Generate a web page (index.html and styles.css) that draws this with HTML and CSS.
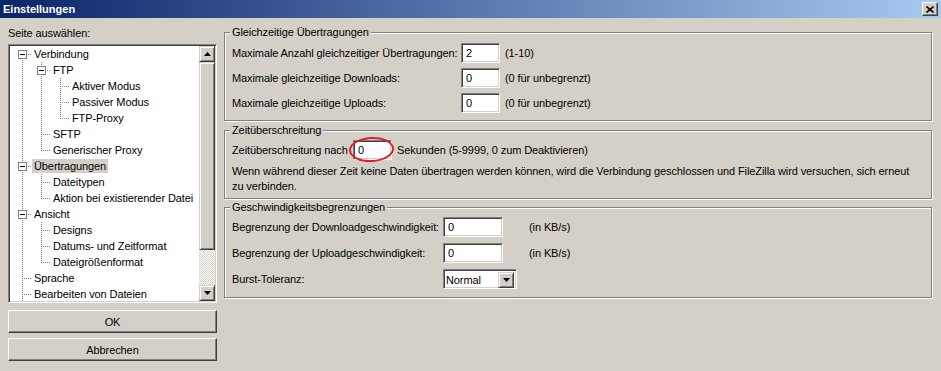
FILE: index.html
```html
<!DOCTYPE html>
<html lang="de">
<head>
<meta charset="utf-8">
<title>Einstellungen</title>
<link rel="stylesheet" href="styles.css">
</head>
<body>
<div class="titlebar">
  <span class="title">Einstellungen</span>
  <span class="close"><svg width="8" height="7" viewBox="0 0 8 7"><path d="M0.5 0.5 L7.5 6.5 M7.5 0.5 L0.5 6.5" stroke="#000" stroke-width="1.6" fill="none"/></svg></span>
</div>
<div class="main">
  <div class="left">
    <div class="pick-label">Seite auswählen:</div>
    <div class="tree">
      <div class="tree-list">
        <div class="row"><span class="c c-ef"><span class="box"></span></span><span class="t">Verbindung</span></div>
        <div class="row"><span class="c c-v"></span><span class="c c-et"><span class="box"></span></span><span class="t">FTP</span></div>
        <div class="row"><span class="c c-v"></span><span class="c c-v"></span><span class="c c-t"></span><span class="t">Aktiver Modus</span></div>
        <div class="row"><span class="c c-v"></span><span class="c c-v"></span><span class="c c-t"></span><span class="t">Passiver Modus</span></div>
        <div class="row"><span class="c c-v"></span><span class="c c-v"></span><span class="c c-l"></span><span class="t">FTP-Proxy</span></div>
        <div class="row"><span class="c c-v"></span><span class="c c-t"></span><span class="t">SFTP</span></div>
        <div class="row"><span class="c c-v"></span><span class="c c-l"></span><span class="t">Generischer Proxy</span></div>
        <div class="row"><span class="c c-et"><span class="box"></span></span><span class="t sel">Übertragungen</span></div>
        <div class="row"><span class="c c-v"></span><span class="c c-t"></span><span class="t">Dateitypen</span></div>
        <div class="row"><span class="c c-v"></span><span class="c c-l"></span><span class="t">Aktion bei existierender Datei</span></div>
        <div class="row"><span class="c c-et"><span class="box"></span></span><span class="t">Ansicht</span></div>
        <div class="row"><span class="c c-v"></span><span class="c c-t"></span><span class="t">Designs</span></div>
        <div class="row"><span class="c c-v"></span><span class="c c-t"></span><span class="t">Datums- und Zeitformat</span></div>
        <div class="row"><span class="c c-v"></span><span class="c c-l"></span><span class="t">Dateigrößenformat</span></div>
        <div class="row"><span class="c c-t"></span><span class="t">Sprache</span></div>
        <div class="row"><span class="c c-t"></span><span class="t">Bearbeiten von Dateien</span></div>
      </div>
      <div class="scroll">
        <div class="sbtn"><svg width="7" height="4" viewBox="0 0 7 4"><path d="M3.5 0 L7 4 L0 4 Z" fill="#000"/></svg></div>
        <div class="thumb"></div>
        <div class="track"></div>
        <div class="sbtn"><svg width="7" height="4" viewBox="0 0 7 4"><path d="M0 0 L7 0 L3.5 4 Z" fill="#000"/></svg></div>
      </div>
    </div>
    <div class="btn btn-ok">OK</div>
    <div class="btn btn-cancel">Abbrechen</div>
  </div>
  <div class="right">
    <div class="group g1">
      <div class="gtitle">Gleichzeitige Übertragungen</div>
      <div class="grid grid1">
        <span>Maximale Anzahl gleichzeitiger Übertragungen:</span><span class="input">2</span><span class="note">(1-10)</span>
        <span>Maximale gleichzeitige Downloads:</span><span class="input">0</span><span class="note">(0 für unbegrenzt)</span>
        <span>Maximale gleichzeitige Uploads:</span><span class="input">0</span><span class="note">(0 für unbegrenzt)</span>
      </div>
    </div>
    <div class="group g2">
      <div class="gtitle">Zeitüberschreitung</div>
      <div class="trow">
        <span class="tlabel">Zeitüberschreitung nach</span>
        <span class="hl"><span class="input w39">0</span><span class="ring"></span></span>
        <span class="note">Sekunden (5-9999, 0 zum Deaktivieren)</span>
      </div>
      <p class="para">Wenn während dieser Zeit keine Daten übertragen werden können, wird die Verbindung geschlossen und FileZilla wird versuchen, sich erneut<br>zu verbinden.</p>
    </div>
    <div class="group g3">
      <div class="gtitle">Geschwindigkeitsbegrenzungen</div>
      <div class="grid grid3">
        <span>Begrenzung der Downloadgeschwindigkeit:</span><span class="input">0</span><span class="note">(in KB/s)</span>
        <span>Begrenzung der Uploadgeschwindigkeit:</span><span class="input">0</span><span class="note">(in KB/s)</span>
        <span>Burst-Toleranz:</span>
        <span class="select"><span class="sval">Normal</span><span class="sdrop"><svg width="7" height="4" viewBox="0 0 7 4"><path d="M0 0 L7 0 L3.5 4 Z" fill="#000"/></svg></span></span>
        <span></span>
      </div>
    </div>
  </div>
</div>
</body>
</html>
```
FILE: styles.css
```css
* { box-sizing: border-box; }
body {
  margin: 0;
  width: 941px;
  height: 371px;
  overflow: hidden;
  background: #d4d0c8;
  font-family: "Liberation Sans", Arial, sans-serif;
  font-size: 11px;
  letter-spacing: -0.1px;
  color: #000;
}
.titlebar {
  height: 18px;
  display: flex;
  align-items: center;
  justify-content: space-between;
  padding: 0 3px 0 3px;
  background: linear-gradient(to right, #0a246a, #a6caf0);
}
.title { color: #fff; font-weight: bold; font-size: 11px; letter-spacing: 0; }
.close {
  width: 16px;
  height: 14px;
  display: flex;
  align-items: center;
  justify-content: center;
  background: #d4d0c8;
  border: 1px solid;
  border-color: #fff #404040 #404040 #fff;
  box-shadow: inset -1px -1px #808080;
}
.main {
  display: flex;
  gap: 7px;
  padding: 9px 0 0 8px;
}
.left { width: 209px; display: flex; flex-direction: column; }
.pick-label { line-height: 13px; margin-bottom: 4px; }
.tree {
  height: 259px;
  display: flex;
  background: #fff;
  border: 1px solid;
  border-color: #808080 #fff #fff #808080;
  box-shadow: inset 1px 1px #404040, inset -1px -1px #d4d0c8;
  padding: 1px;
}
.tree-list { flex: 1; overflow: hidden; padding-left: 3px; }
.row { display: flex; height: 16px; }
.c {
  width: 19px;
  height: 16px;
  flex: none;
  display: flex;
  padding: 4px 0 0 5px;
  --v: repeating-linear-gradient(to bottom, #808080 0 1px, transparent 1px 2px);
  --h: repeating-linear-gradient(to right, #808080 0 1px, transparent 1px 2px);
}
.c-v { background: var(--v) 9px 0 / 1px 16px no-repeat; }
.c-t { background: var(--h) 11px 8px / 8px 1px no-repeat, var(--v) 9px 0 / 1px 16px no-repeat; }
.c-l { background: var(--h) 11px 8px / 8px 1px no-repeat, var(--v) 9px 0 / 1px 9px no-repeat; }
.c-ef { background: var(--h) 11px 8px / 8px 1px no-repeat, var(--v) 9px 8px / 1px 8px no-repeat; }
.c-et { background: var(--h) 11px 8px / 8px 1px no-repeat, var(--v) 9px 0 / 1px 16px no-repeat; }
.box {
  width: 9px;
  height: 9px;
  border: 1px solid #808080;
  background: linear-gradient(#000, #000) center / 5px 1px no-repeat, #fff;
}
.t { padding: 0 2px; line-height: 14px; height: 14px; margin-top: 1px; white-space: nowrap; }
.sel { background: #d4d0c8; }
.scroll { width: 16px; flex: none; display: flex; flex-direction: column; }
.sbtn, .thumb {
  background: #d4d0c8;
  border: 1px solid;
  border-color: #d4d0c8 #404040 #404040 #d4d0c8;
  box-shadow: inset 1px 1px #fff, inset -1px -1px #808080;
}
.sbtn { height: 16px; display: flex; align-items: center; justify-content: center; }
.thumb { height: 188px; }
.track {
  flex: 1;
  background: repeating-conic-gradient(#d4d0c8 0 25%, #fff 0 50%) 0 0 / 2px 2px;
}
.btn {
  height: 23px;
  display: flex;
  align-items: center;
  justify-content: center;
  border: 1px solid;
  border-color: #fff #404040 #404040 #fff;
  box-shadow: inset -1px -1px #808080;
}
.btn-ok { margin-top: 7px; }
.btn-cancel { margin-top: 5px; }
.right { width: 708px; display: flex; flex-direction: column; }
.group {
  border: 1px solid #808080;
  box-shadow: inset 1px 1px #fff, 1px 1px #fff;
  padding: 0 6px 0 7px;
}
.gtitle {
  width: fit-content;
  margin: -7px 0 0 -2px;
  padding: 0 2px;
  line-height: 13px;
  background: #d4d0c8;
}
.g1 { margin-top: 5px; padding-bottom: 7px; }
.g2 { margin-top: 9px; padding-bottom: 4px; }
.g3 { margin-top: 8px; padding-bottom: 8px; }
.grid { display: grid; align-items: center; white-space: nowrap; }
.grid1 { grid-template-columns: 229px 39px auto; row-gap: 5px; margin-top: 4px; }
.grid3 { grid-template-columns: 211px 60px auto; row-gap: 6px; margin-top: 3px; }
.grid1 .note { margin-left: 5px; }
.grid3 .note { margin-left: 26px; }
.input {
  height: 20px;
  background: #fff;
  border: 1px solid;
  border-color: #808080 #fff #fff #808080;
  box-shadow: inset 1px 1px #404040, inset -1px -1px #d4d0c8;
  padding: 0 4px;
  line-height: 18px;
}
.w39 { width: 39px; display: block; }
.trow { display: flex; align-items: center; margin-top: 3px; white-space: nowrap; }
.tlabel { width: 121px; }
.trow .note { margin-left: 5px; }
.hl { position: relative; display: block; }
.ring {
  position: absolute;
  left: -4px;
  right: -2px;
  top: -3px;
  bottom: -2px;
  border: 2px solid #d8202a;
  border-radius: 50%;
  transform: rotate(-3deg);
}
.para { margin: 4px 0 0 0; line-height: 15px; }
.select {
  width: 74px;
  height: 20px;
  display: flex;
  background: #fff;
  border: 1px solid;
  border-color: #808080 #fff #fff #808080;
  box-shadow: inset 1px 1px #404040, inset -1px -1px #d4d0c8;
  padding: 2px;
}
.sval { flex: 1; line-height: 16px; padding-left: 0; }
.sdrop {
  width: 16px;
  height: 16px;
  display: flex;
  align-items: center;
  justify-content: center;
  background: #d4d0c8;
  border: 1px solid;
  border-color: #d4d0c8 #404040 #404040 #d4d0c8;
  box-shadow: inset 1px 1px #fff, inset -1px -1px #808080;
}
```
